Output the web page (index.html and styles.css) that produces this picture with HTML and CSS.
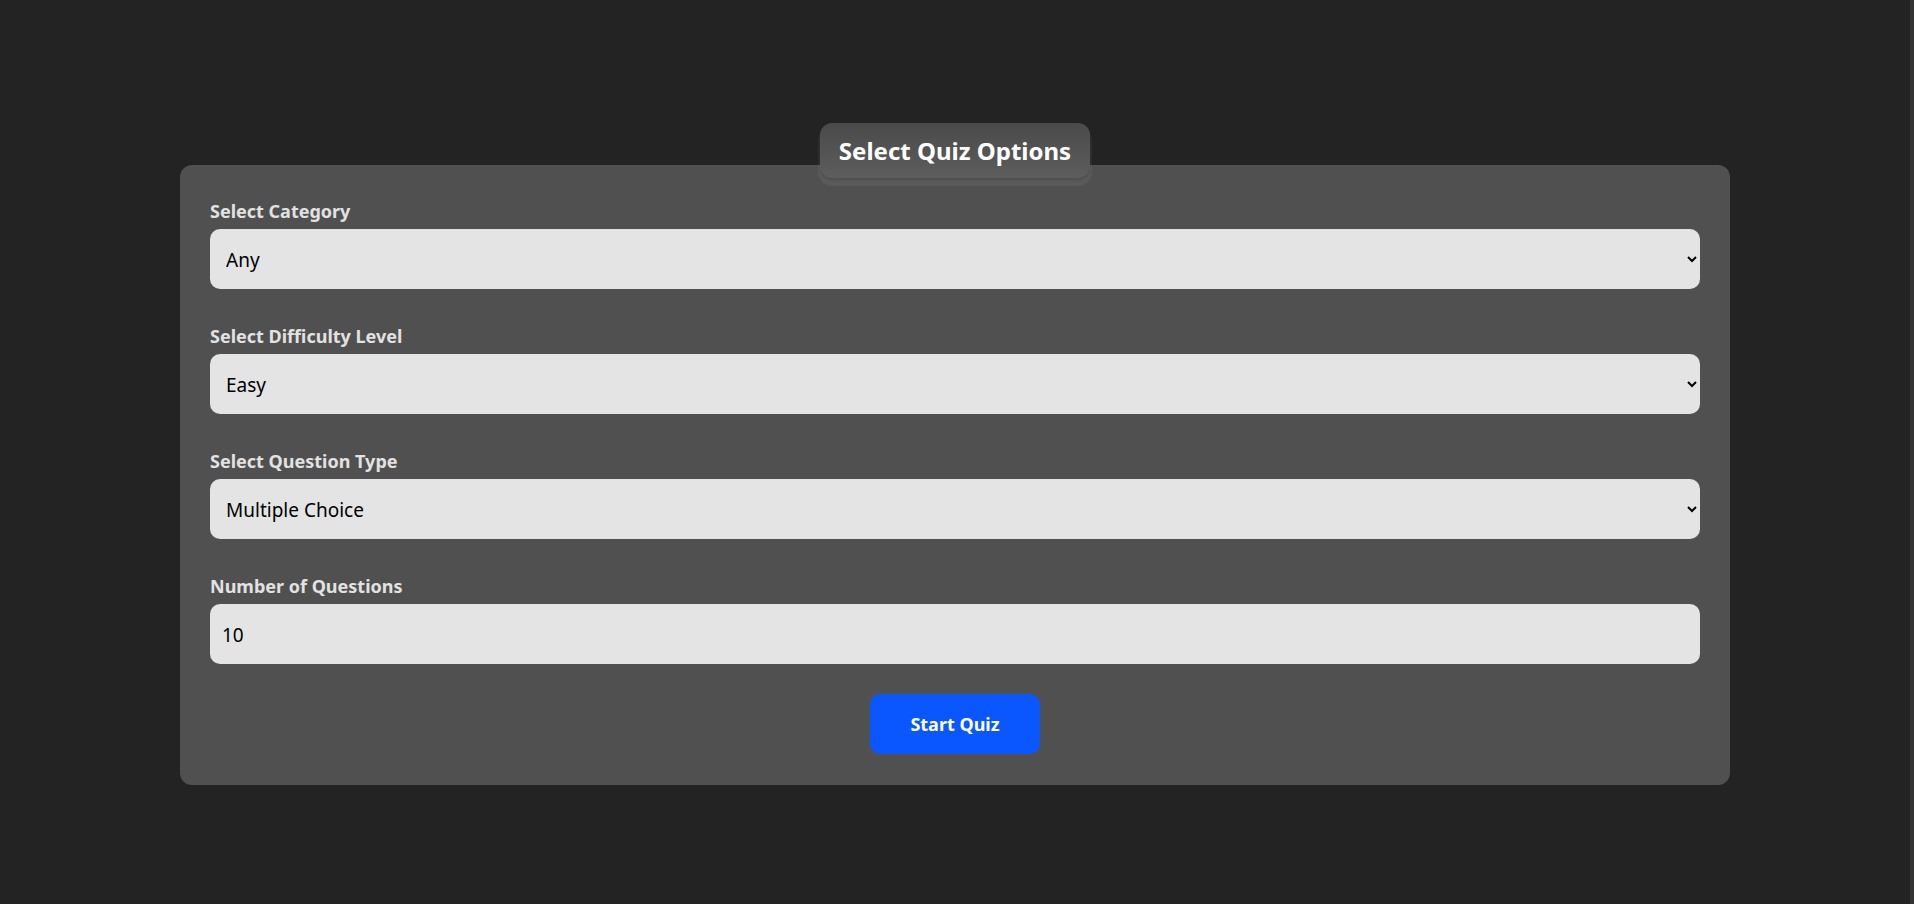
FILE: index.html
```html
<!DOCTYPE html>
<html lang="en">
<head>
<meta charset="utf-8">
<title>Quiz Options</title>
<link rel="stylesheet" href="styles.css">
</head>
<body>
<div class="edge"></div>
<main class="card">
  <h1 class="badge">Select Quiz Options</h1>
  <div class="group">
    <label class="label" for="cat">Select Category</label>
    <select id="cat" class="field">
      <option>Any</option>
    </select>
  </div>
  <div class="group">
    <label class="label" for="diff">Select Difficulty Level</label>
    <select id="diff" class="field">
      <option>Easy</option>
    </select>
  </div>
  <div class="group">
    <label class="label" for="type">Select Question Type</label>
    <select id="type" class="field">
      <option>Multiple Choice</option>
    </select>
  </div>
  <div class="group group-last">
    <label class="label" for="num">Number of Questions</label>
    <input id="num" class="field input" type="number" value="10">
  </div>
  <div class="actions">
    <button class="start" type="button">Start Quiz</button>
  </div>
</main>
</body>
</html>
```
FILE: styles.css
```css
html, body {
  margin: 0;
  padding: 0;
  background: #232323;
  height: 100%;
}
body {
  font-family: "Noto Sans", "Open Sans", sans-serif;
  overflow: hidden;
  position: relative;
}
.edge {
  position: absolute;
  top: 0;
  right: 0;
  width: 4px;
  height: 100%;
  background: #333333;
}
.card {
  position: relative;
  width: 1550px;
  box-sizing: border-box;
  margin: 165px 0 0 180px;
  padding: 34px 30px 31px;
  background: #505050;
  border-radius: 12px;
}
.badge {
  position: absolute;
  top: -42px;
  left: 50%;
  transform: translateX(-50%);
  margin: 0;
  width: 270px;
  height: 55px;
  box-sizing: border-box;
  display: flex;
  align-items: center;
  justify-content: center;
  border-radius: 12px;
  background: linear-gradient(#4a4a4a, #5d5d5d);
  color: #ffffff;
  font-size: 24px;
  font-weight: 700;
  white-space: nowrap;
  box-shadow: 0 6px 1px 2px rgba(255, 255, 255, 0.06), 0 2px 2px rgba(0, 0, 0, 0.15);
}
.group {
  display: flex;
  flex-direction: column;
  gap: 6px;
  margin-bottom: 35px;
}
.group-last {
  margin-bottom: 30px;
}
.label {
  color: #e2e2e2;
  font-size: 18px;
  font-weight: 700;
  line-height: 24px;
}
.field {
  height: 60px;
  width: 100%;
  box-sizing: border-box;
  border: none;
  border-radius: 10px;
  background-color: #e4e4e4;
  color: #000000;
  font-family: inherit;
  font-size: 19px;
  padding: 1px 12px 0 12px;
  outline: none;
}
.input {
  padding: 1px 12px 0;
}
.actions {
  display: flex;
  justify-content: center;
}
.start {
  width: 170px;
  height: 60px;
  border: none;
  border-radius: 10px;
  background: #0b57ff;
  color: #ffffff;
  font-family: inherit;
  font-size: 18px;
  font-weight: 700;
  cursor: pointer;
}
```
